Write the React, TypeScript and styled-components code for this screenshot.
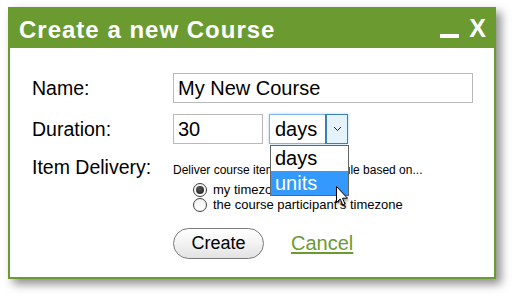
import { FC } from 'react';
import styled, { createGlobalStyle } from 'styled-components';

const GREEN = '#6b9a31';

const GlobalStyle = createGlobalStyle`
  html, body {
    margin: 0;
    padding: 0;
    background: #fff;
  }
  body {
    font-family: 'Liberation Sans', Arial, sans-serif;
    color: #000;
  }
`;

const Stage = styled.div`
  width: 516px;
  height: 298px;
  padding: 7px 0 0 8px;
  box-sizing: border-box;
`;

const Dialog = styled.div`
  width: 488px;
  height: 272px;
  box-sizing: border-box;
  border: 2px solid ${GREEN};
  background: #fff;
  box-shadow: 5px 5px 9px rgba(0, 0, 0, 0.45);
  display: flex;
  flex-direction: column;
`;

const TitleBar = styled.div`
  height: 39px;
  background: ${GREEN};
  display: flex;
  align-items: center;
  padding: 0 8px 0 9px;
  color: #fff;
`;

const Title = styled.h1`
  margin: 0;
  flex: 1;
  font-size: 24px;
  font-weight: bold;
  letter-spacing: 1px;
  line-height: 1;
  padding-top: 2px;
`;

const Minimize = styled.span`
  display: block;
  width: 19px;
  height: 4px;
  background: #fff;
  margin: 14px 10px 0 0;
`;

const Close = styled.span`
  font-size: 25px;
  font-weight: bold;
  line-height: 1;
`;

const Body = styled.div`
  padding: 25px 0 0 22px;
`;

const FormGrid = styled.div`
  display: grid;
  grid-template-columns: 141px 1fr;
  row-gap: 11px;
  align-items: center;
`;

const Label = styled.label<{ $baseline?: boolean }>`
  font-size: 19.5px;
  line-height: 24px;
  align-self: ${(p) => (p.$baseline ? 'baseline' : 'center')};
`;

const TextBox = styled.div<{ $width: number }>`
  width: ${(p) => p.$width}px;
  height: 30px;
  box-sizing: border-box;
  border: 1px solid #b9b9b9;
  font-size: 20px;
  line-height: 28px;
  padding-left: 4px;
`;

const Row = styled.div`
  display: flex;
  align-items: center;
  gap: 6px;
`;

const SelectWrap = styled.div`
  position: relative;
`;

const SelectBox = styled.div`
  width: 79px;
  height: 30px;
  box-sizing: border-box;
  border: 1px solid #7eb4ea;
  box-shadow: 0 0 3px #a9d2f7;
  display: flex;
  font-size: 20px;
`;

const SelectValue = styled.span`
  flex: 1;
  padding-left: 5px;
  line-height: 28px;
`;

const SelectArrow = styled.span`
  width: 21px;
  background: #e5f1fb;
  border-left: 1px solid #3c7fb1;
  box-sizing: border-box;
  display: flex;
  align-items: center;
  justify-content: center;
  outline: 1px solid #3c7fb1;
`;

const DropList = styled.ul`
  position: absolute;
  top: 31px;
  left: 1px;
  width: 79px;
  margin: 0;
  padding: 0;
  list-style: none;
  box-sizing: border-box;
  border: 1px solid #646464;
  background: #fff;
  z-index: 2;
  font-size: 20px;
`;

const DropItem = styled.li<{ $active?: boolean }>`
  height: ${(p) => (p.$active ? 24 : 25)}px;
  line-height: ${(p) => (p.$active ? 24 : 25)}px;
  padding-left: 4px;
  background: ${(p) => (p.$active ? '#3399ff' : '#fff')};
  color: ${(p) => (p.$active ? '#fff' : '#000')};
`;

const Pointer = styled.svg`
  position: absolute;
  left: 67px;
  top: 72px;
  z-index: 3;
  filter: drop-shadow(1px 2px 1px rgba(0, 0, 0, 0.35));
`;

const Delivery = styled.div`
  align-self: baseline;
  margin-top: 1px;
`;

const Hint = styled.div`
  font-size: 12px;
  line-height: 15px;
`;

const RadioList = styled.div`
  padding: 4px 0 0 20px;
`;

const RadioRow = styled.div`
  display: flex;
  align-items: center;
  gap: 6px;
  height: 15px;
  font-size: 13px;
`;

const RadioDot = styled.span<{ $checked?: boolean }>`
  width: 14px;
  height: 14px;
  box-sizing: border-box;
  border-radius: 50%;
  border: 1px solid #3c3c3c;
  background: linear-gradient(#f2f2f2, #ffffff);
  display: flex;
  align-items: center;
  justify-content: center;

  &::after {
    content: '';
    display: ${(p) => (p.$checked ? 'block' : 'none')};
    width: 8px;
    height: 8px;
    border-radius: 50%;
    background: radial-gradient(circle at 40% 35%, #555, #1e1e1e);
  }
`;

const Actions = styled.div`
  display: flex;
  align-items: center;
  gap: 27px;
  margin: 16px 0 0 141px;
`;

const Button = styled.button`
  width: 91px;
  height: 31px;
  border: 1px solid #7a7a7a;
  border-radius: 16px;
  background: linear-gradient(#ffffff 0%, #f4f4f4 45%, #e2e2e2 100%);
  font-family: 'Liberation Sans', Arial, sans-serif;
  font-size: 18px;
  color: #000;
  padding: 0;
`;

const CancelLink = styled.a`
  font-size: 20px;
  color: ${GREEN};
  text-decoration: underline;
  text-underline-offset: 2px;
  cursor: pointer;
`;

const Chevron: FC = () => (
  <svg width="9" height="6" viewBox="0 0 9 6">
    <path d="M1 1 L4.5 4.5 L8 1" fill="none" stroke="#222" strokeWidth="1" />
  </svg>
);

const App: FC = () => (
  <>
    <GlobalStyle />
    <Stage>
      <Dialog>
        <TitleBar>
          <Title>Create a new Course</Title>
          <Minimize />
          <Close>X</Close>
        </TitleBar>
        <Body>
          <FormGrid>
            <Label>Name:</Label>
            <TextBox $width={300}>My New Course</TextBox>

            <Label>Duration:</Label>
            <Row>
              <TextBox $width={90}>30</TextBox>
              <SelectWrap>
                <SelectBox>
                  <SelectValue>days</SelectValue>
                  <SelectArrow>
                    <Chevron />
                  </SelectArrow>
                </SelectBox>
                <DropList>
                  <DropItem>days</DropItem>
                  <DropItem $active>units</DropItem>
                </DropList>
                <Pointer width="13" height="21" viewBox="0 0 13 21">
                  <path
                    d="M0.5 0.5 L0.5 16.5 L4.2 13 L6.8 19 L9 18 L6.5 12.2 L11.5 12.2 Z"
                    fill="#fff"
                    stroke="#000"
                    strokeWidth="1"
                    strokeLinejoin="round"
                  />
                </Pointer>
              </SelectWrap>
            </Row>

            <Label $baseline>Item Delivery:</Label>
            <Delivery>
              <Hint>Deliver course items on a schedule based on...</Hint>
              <RadioList>
                <RadioRow>
                  <RadioDot $checked />
                  my timezone
                </RadioRow>
                <RadioRow>
                  <RadioDot />
                  the course participant's timezone
                </RadioRow>
              </RadioList>
            </Delivery>
          </FormGrid>
          <Actions>
            <Button>Create</Button>
            <CancelLink>Cancel</CancelLink>
          </Actions>
        </Body>
      </Dialog>
    </Stage>
  </>
);

export default App;
